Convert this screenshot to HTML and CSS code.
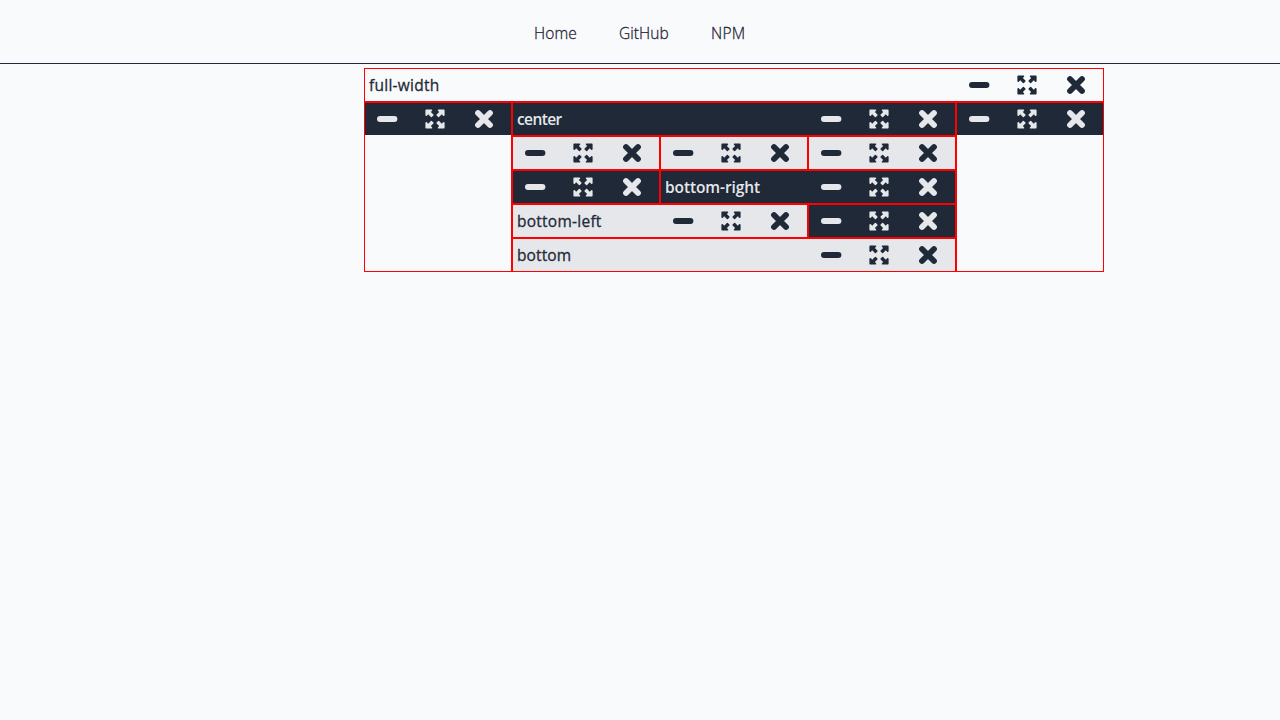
FILE: index.html
```html
<!DOCTYPE html>
<html lang="en">
<head>
<meta charset="utf-8">
<title>Window grid</title>
<link rel="stylesheet" href="styles.css">
</head>
<body>
<header class="nav"><a class="home">Home</a><a class="github">GitHub</a><a class="npm">NPM</a></header>
<main class="grid" id="grid"></main>
<template id="controls">
  <span class="controls">
    <svg class="minus" viewBox="0 0 21 20"><rect x="0" y="7" width="20.4" height="6" rx="3"/></svg>
    <svg class="expand" viewBox="0 0 20 20">
      <g id="arrow"><path d="M1.2.4H6.5Q7.7.6 7.2 1.5L5.9 2.9 8.4 5.5Q8.8 6 8.4 6.5L6.9 8Q6.4 8.3 5.9 7.9L3.2 5.3 1.9 6.7Q.5 7.3.4 6V1.2Q.4.4 1.2.4Z"/></g>
      <use href="#arrow" transform="translate(20 0) scale(-1 1)"/>
      <use href="#arrow" transform="translate(0 20) scale(1 -1)"/>
      <use href="#arrow" transform="translate(20 20) scale(-1 -1)"/>
    </svg>
    <svg class="close" viewBox="0 0 20 20"><path d="M4 4 16 16M16 4 4 16"/></svg>
  </span>
</template>
<script src="app.js"></script>
</body>
</html>
```
FILE: styles.css
```css
* { box-sizing: border-box; }
body {
  margin: 0;
  background: #f9fafc;
  color: #1f2937;
  font: 16px/24px "Open Sans", "Noto Sans", sans-serif;
}
.nav {
  display: flex;
  justify-content: center;
  gap: 42px;
  height: 64px;
  padding-top: 21px;
  border-bottom: 1px solid #1f2937;
  font-weight: 300;
  font-size: 15.5px;
  -webkit-text-stroke: .3px currentColor;
}
.nav a { white-space: nowrap; }
.home { width: 43px; letter-spacing: .1px; }
.github { width: 50px; letter-spacing: .05px; }
.npm { width: 35px; letter-spacing: .2px; }
.grid {
  display: grid;
  grid-template-columns: repeat(5, 148px);
  grid-template-rows: repeat(6, 34px);
  width: 740px;
  margin: 4px 0 0 364px;
}
.cell { border: 1px solid red; }
.bar {
  display: flex;
  justify-content: space-between;
  height: 32px;
}
.title {
  padding-left: 4px;
  font-size: 15.5px;
  font-weight: 600;
  line-height: 32px;
  white-space: nowrap;
}
.medium .title {
  font-weight: 500;
  -webkit-text-stroke: .3px currentColor;
}
.dark .bar { background: #1f2937; color: #e5e7eb; }
.light .bar { background: #e5e7eb; }
.controls {
  display: grid;
  grid-template-columns: 48px 49px 48px;
  width: 145px;
  flex: none;
  align-items: center;
  margin-left: auto;
  margin-right: 1px;
}
.controls svg { width: 20px; height: 20px; fill: currentColor; }
.controls .minus { width: 21px; margin-left: 12px; }
.controls .expand { margin-left: 12px; }
.controls .close {
  margin-left: 12px;
  fill: none;
  stroke: currentColor;
  stroke-width: 5.8;
  stroke-linecap: round;
}
```
FILE: app.js
```js
const cells = [
  { area: "1 / 1 / 2 / 6", title: "full-width", style: "medium", spacing: 0.25 },
  { area: "2 / 1 / 7 / 2", style: "dark" },
  { area: "2 / 2 / 3 / 5", title: "center", style: "dark", spacing: -0.6 },
  { area: "2 / 5 / 7 / 6", style: "dark" },
  { area: "3 / 2 / 4 / 3", style: "light" },
  { area: "3 / 3 / 4 / 4", style: "light" },
  { area: "3 / 4 / 4 / 5", style: "light" },
  { area: "4 / 2 / 5 / 3", style: "dark" },
  { area: "4 / 3 / 5 / 5", title: "bottom-right", style: "dark", spacing: -0.1 },
  { area: "5 / 2 / 6 / 4", title: "bottom-left", style: "light medium", spacing: 0.25 },
  { area: "5 / 4 / 6 / 5", style: "dark" },
  { area: "6 / 2 / 7 / 5", title: "bottom", style: "light medium", spacing: 0.1 }
];
const controls = document.getElementById("controls");
for (const item of cells) {
  const cell = document.createElement("section");
  cell.className = "cell " + item.style;
  cell.style.gridArea = item.area;
  const bar = document.createElement("div");
  bar.className = "bar";
  if (item.title) {
    const title = document.createElement("span");
    title.className = "title";
    title.textContent = item.title;
    title.style.letterSpacing = item.spacing + "px";
    bar.append(title);
  }
  bar.append(controls.content.cloneNode(true));
  cell.append(bar);
  document.getElementById("grid").append(cell);
}
```
